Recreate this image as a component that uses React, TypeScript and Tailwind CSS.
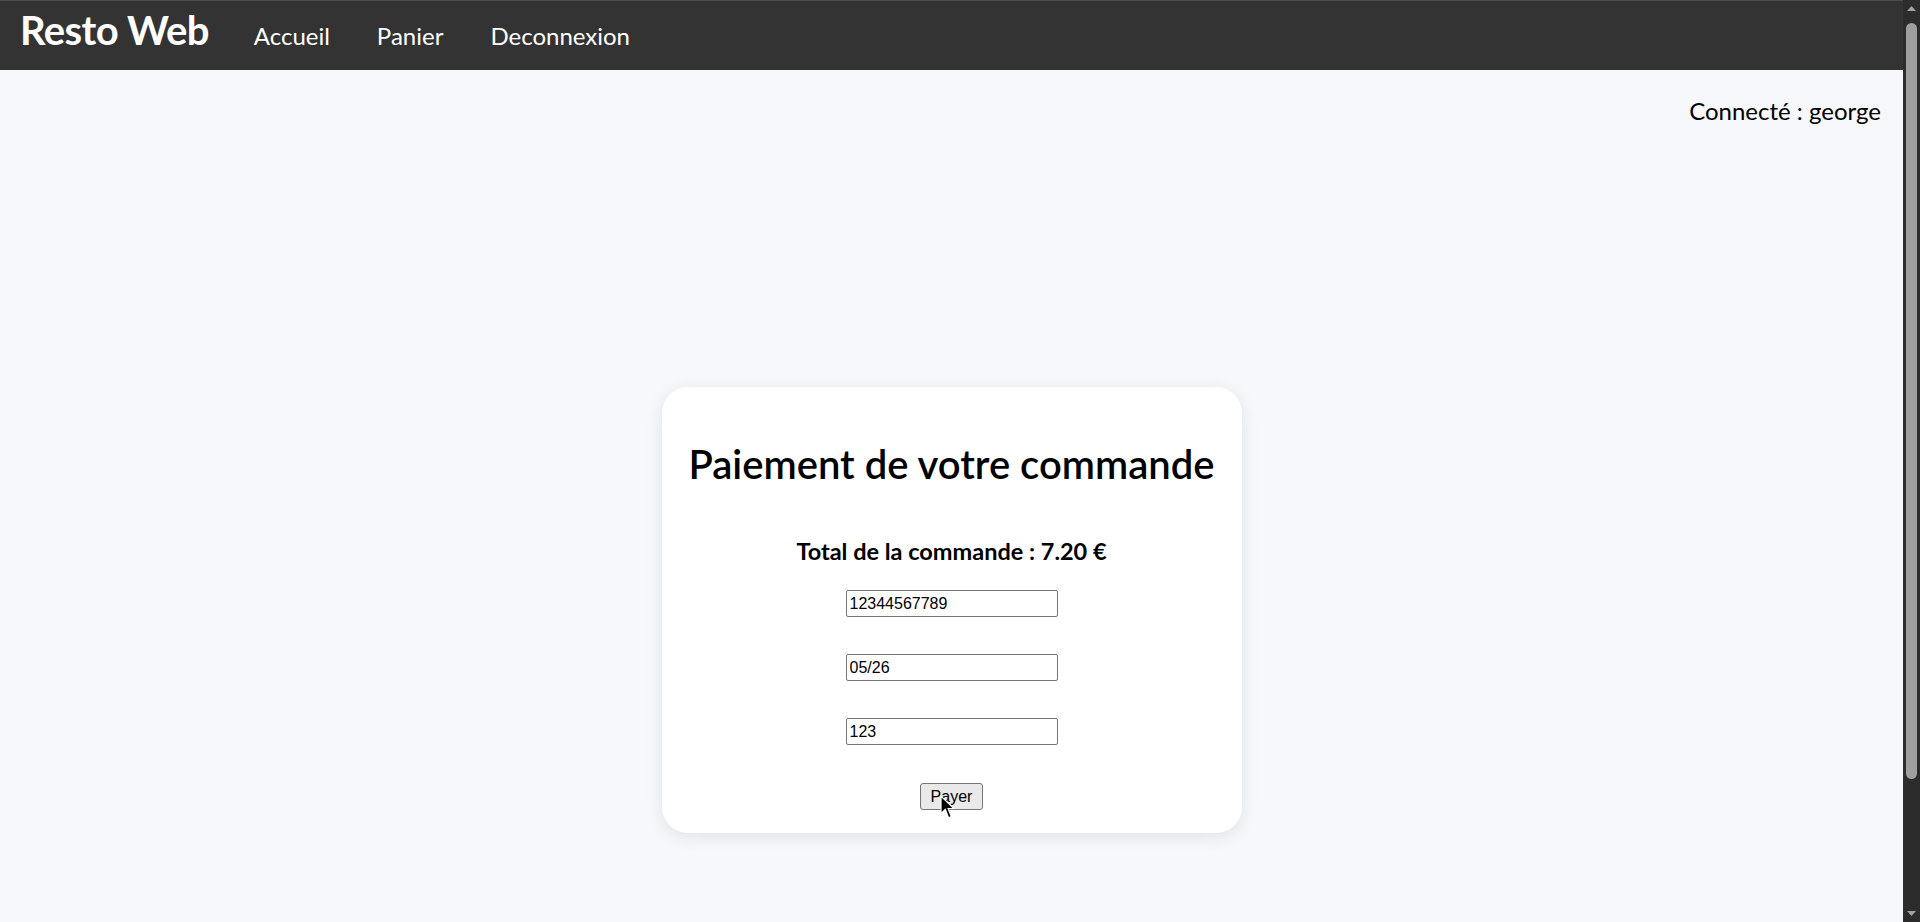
import { useState } from 'react';

const font = { fontFamily: 'Lato, "Noto Sans", sans-serif' };

function FakeScrollbar() {
    return (
        <div className="w-[17px] h-full bg-[#2c2c2c] flex flex-col items-center">
            <svg width="17" height="17" viewBox="0 0 17 17">
                <path d="M4 11 L8.5 6 L13 11 Z" fill="#a3a3a3" />
            </svg>
            <div className="w-[11px] h-[756px] mt-[6px] rounded-full bg-[#9f9f9f]" />
            <div className="flex-1" />
            <svg width="17" height="17" viewBox="0 0 17 17">
                <path d="M4 6 L8.5 11 L13 6 Z" fill="#a3a3a3" />
            </svg>
        </div>
    );
}

export default function App() {
    const [card, setCard] = useState('12344567789');
    const [expiry, setExpiry] = useState('05/26');
    const [cvc, setCvc] = useState('123');

    const inputClass =
        'w-[212px] h-[27px] px-[3px] border border-[#767676] rounded-[2px] bg-white text-[16px] text-black outline-none';

    return (
        <div className="h-screen w-full flex overflow-hidden bg-[#f7f8fc]">
            <div className="flex-1 flex flex-col" style={font}>
                <nav className="h-[70px] bg-[#333333] border-t border-[#4a4a4a] flex items-baseline pt-[5px] pl-[20px] text-white">
                    <span className="text-[40px] leading-[48px] font-bold tracking-[-0.6px]">Resto Web</span>
                    <div className="flex items-baseline gap-[47px] ml-[45px] text-[24px]">
                        <a href="#">Accueil</a>
                        <a href="#">Panier</a>
                        <a href="#">Deconnexion</a>
                    </div>
                </nav>

                <div className="flex justify-end pr-[22px] mt-[24px]">
                    <p className="text-[24px] leading-[33px] text-black">Connecté : george</p>
                </div>

                <div className="flex justify-center mt-[260px]">
                    <form
                        onSubmit={(e) => e.preventDefault()}
                        className="w-[580px] bg-white rounded-[26px] shadow-[0_4px_18px_rgba(0,0,0,0.09)] pt-[53px] pb-[23px] flex flex-col items-center"
                    >
                        <h1 className="text-[40px] leading-[48px] font-semibold text-black">
                            Paiement de votre commande
                        </h1>
                        <h3 className="mt-[48px] text-[23.5px] leading-[30px] font-bold text-black">
                            Total de la commande : 7.20 €
                        </h3>

                        <div
                            className="mt-[24px] flex flex-col items-center gap-[37px]"
                            style={{ fontFamily: '"Liberation Sans", Arial, sans-serif' }}
                        >
                            <input className={inputClass} value={card} onChange={(e) => setCard(e.target.value)} />
                            <input className={inputClass} value={expiry} onChange={(e) => setExpiry(e.target.value)} />
                            <input className={inputClass} value={cvc} onChange={(e) => setCvc(e.target.value)} />

                            <div className="relative mt-[1px]">
                                <button
                                    type="submit"
                                    className="w-[63px] h-[27px] bg-[#e9e9e9] border border-[#767676] rounded-[3px] text-[16px] text-black"
                                >
                                    Payer
                                </button>
                                <svg
                                    className="absolute left-[20px] top-[12px]"
                                    width="15"
                                    height="25"
                                    viewBox="0 0 14 23"
                                >
                                    <path
                                        d="M1 1 L1 17 L5 13 L8 21 L10.5 20 L7.5 12.5 L13 12.5 Z"
                                        fill="#000"
                                        stroke="#fff"
                                        strokeWidth="1"
                                    />
                                </svg>
                            </div>
                        </div>
                    </form>
                </div>
            </div>
            <FakeScrollbar />
        </div>
    );
}
